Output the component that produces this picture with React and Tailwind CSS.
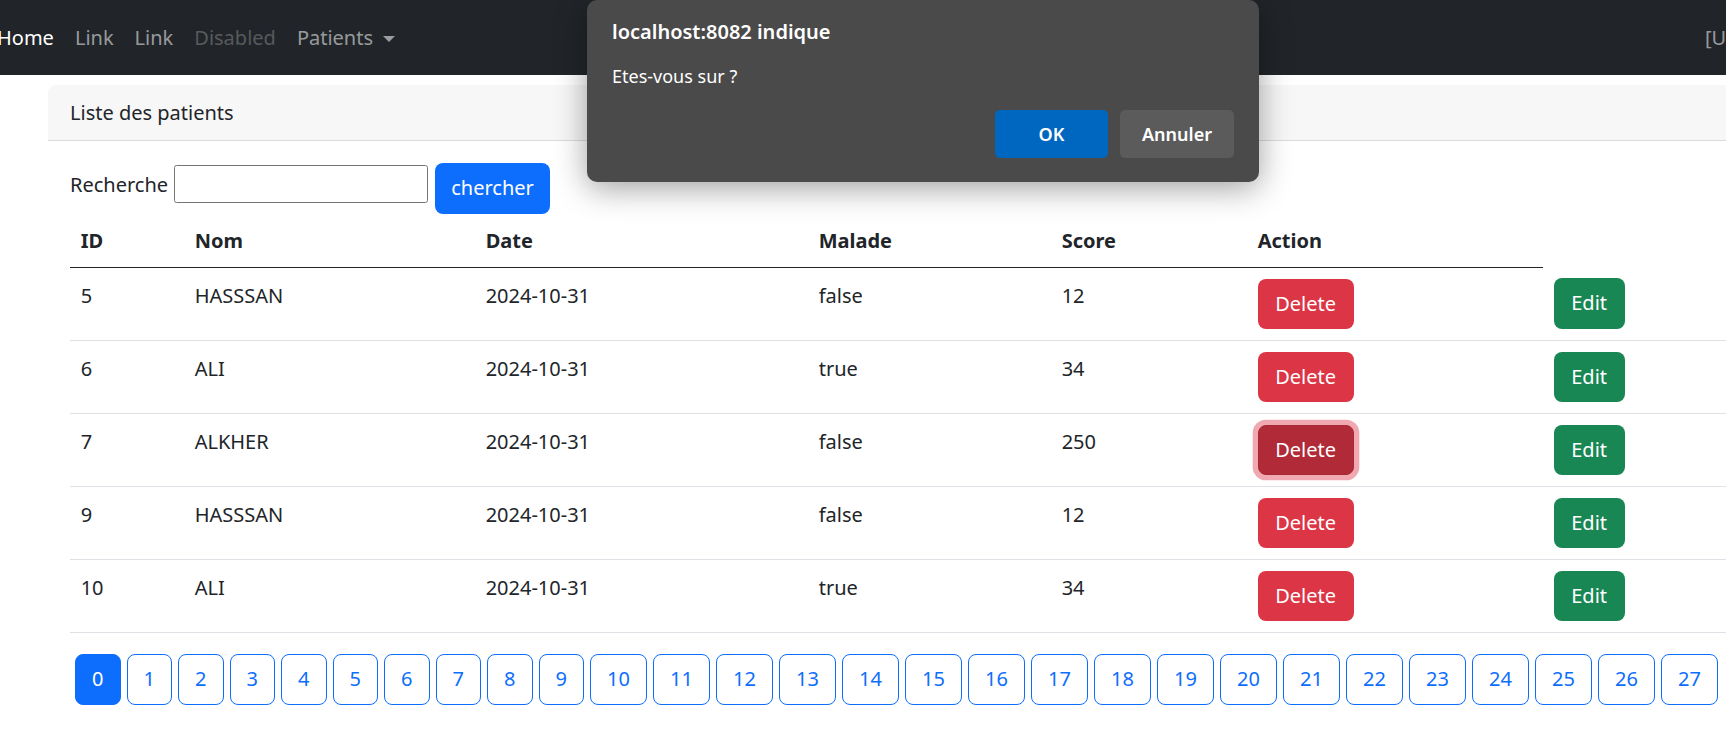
import React from "react";

const rows = [
  { id: 5, nom: "HASSSAN", date: "2024-10-31", malade: "false", score: 12 },
  { id: 6, nom: "ALI", date: "2024-10-31", malade: "true", score: 34 },
  { id: 7, nom: "ALKHER", date: "2024-10-31", malade: "false", score: 250, focus: true },
  { id: 9, nom: "HASSSAN", date: "2024-10-31", malade: "false", score: 12 },
  { id: 10, nom: "ALI", date: "2024-10-31", malade: "true", score: 34 },
];

const headers = ["ID", "Nom", "Date", "Malade", "Score", "Action"];
const pages = Array.from({ length: 28 }, (_, i) => i);

function Td({ children }) {
  return (
    <td className="px-[10.67px] pt-[12px] pb-[9.33px] align-top leading-[32px] border-b-[1.33px] border-[#dee2e6]">
      {children}
    </td>
  );
}

function BtnTd({ children }) {
  return (
    <td className="p-[10.67px] align-top leading-[32px] border-b-[1.33px] border-[#dee2e6]">
      {children}
    </td>
  );
}

export default function App() {
  return (
    <div className="relative w-full h-[729px] overflow-hidden bg-white text-[#212529] font-['Noto_Sans','Open_Sans',sans-serif] text-[20px]">
      {/* Navbar */}
      <nav className="h-[75px] bg-[#212529] flex items-center whitespace-nowrap leading-[32px]">
        <div className="flex items-center -ml-[3px] gap-[21px]">
          <span className="text-white">Home</span>
          <span className="text-[rgba(255,255,255,0.55)]">Link</span>
          <span className="text-[rgba(255,255,255,0.55)]">Link</span>
          <span className="text-[rgba(255,255,255,0.25)]">Disabled</span>
          <span className="flex items-center text-[rgba(255,255,255,0.55)]">
            <span>Patients</span>
            <span className="ml-[10px] mt-[2px] w-0 h-0 border-l-[6px] border-r-[6px] border-t-[6.4px] border-l-transparent border-r-transparent border-t-[rgba(255,255,255,0.55)]"></span>
          </span>
        </div>
        <span className="ml-[1310px] text-[rgba(255,255,255,0.55)]">[USER]</span>
      </nav>

      {/* Card */}
      <div className="pl-[48px] pt-[10px]">
        <div className="w-[1802px] rounded-t-[8px]">
          <div className="bg-[#f7f7f7] rounded-t-[8px] px-[22px] pt-[11.5px] pb-[11.5px] leading-[32px] border-b-[1.33px] border-[#dcdcdc]">
            Liste des patients
          </div>
          <div className="px-[22px] pt-[22px] pb-[40px]">
            {/* Search */}
            <div className="flex items-start h-[50.67px]">
              <span className="w-[98px] mt-[6px] leading-[32px] whitespace-nowrap">Recherche</span>
              <input
                type="text"
                className="ml-[6px] mt-[2px] w-[254px] h-[38px] border-[1.33px] border-[#767676] rounded-[2.67px] bg-white outline-none"
              />
              <button className="ml-[7px] w-[115px] h-[50.67px] rounded-[8px] bg-[#0d6efd] text-white leading-[32px]">
                chercher
              </button>
            </div>

            {/* Table */}
            <table className="table-fixed border-collapse w-[1773px] text-left mb-[21.33px]">
              <colgroup>
                <col className="w-[114px]" />
                <col className="w-[291px]" />
                <col className="w-[333px]" />
                <col className="w-[243px]" />
                <col className="w-[196px]" />
                <col className="w-[296px]" />
                <col className="w-[300px]" />
              </colgroup>
              <thead>
                <tr>
                  {headers.map((h) => (
                    <th
                      key={h}
                      className="px-[10.67px] pt-[11.67px] pb-[9.67px] align-top leading-[32px] font-bold border-b-[1.33px] border-[#212529]"
                    >
                      {h}
                    </th>
                  ))}
                </tr>
              </thead>
              <tbody>
                {rows.map((r) => (
                  <tr key={r.id}>
                    <Td>{r.id}</Td>
                    <Td>{r.nom}</Td>
                    <Td>{r.date}</Td>
                    <Td>{r.malade}</Td>
                    <Td>{r.score}</Td>
                    <BtnTd>
                      {r.focus ? (
                        <button className="block w-[96px] h-[50.67px] rounded-[8px] bg-[#b02a37] border-[1.33px] border-[#a52834] text-white leading-[32px] shadow-[0_0_0_5.33px_rgba(225,83,97,0.5)]">
                          Delete
                        </button>
                      ) : (
                        <button className="block w-[96px] h-[50.67px] rounded-[8px] bg-[#dc3545] text-white leading-[32px]">
                          Delete
                        </button>
                      )}
                    </BtnTd>
                    <BtnTd>
                      <button className="block w-[71px] h-[50.67px] rounded-[8px] bg-[#198754] text-white leading-[32px]">
                        Edit
                      </button>
                    </BtnTd>
                  </tr>
                ))}
              </tbody>
            </table>

            {/* Pagination */}
            <div className="flex gap-[6px] pl-[5px]">
              {pages.map((p) => (
                <button
                  key={p}
                  className={
                    p === 0
                      ? "h-[50.67px] w-[45.5px] rounded-[8px] border-[1.33px] border-[#0d6efd] bg-[#0d6efd] text-white leading-[32px] flex items-center justify-center shrink-0"
                      : p < 10
                      ? "h-[50.67px] w-[45.5px] rounded-[8px] border-[1.33px] border-[#0d6efd] bg-white text-[#0d6efd] leading-[32px] flex items-center justify-center shrink-0"
                      : "h-[50.67px] w-[57px] rounded-[8px] border-[1.33px] border-[#0d6efd] bg-white text-[#0d6efd] leading-[32px] flex items-center justify-center shrink-0"
                  }
                >
                  {p}
                </button>
              ))}
            </div>
          </div>
        </div>
      </div>

      {/* Confirm dialog */}
      <div className="absolute left-[587px] top-0 w-[672px] h-[182px] rounded-[10px] bg-[#4a4a4a] shadow-[0_6px_32px_rgba(0,0,0,0.38)] px-[25px] pt-[18px] text-white">
        <div className="text-[20px] leading-[28px] font-semibold">localhost:8082 indique</div>
        <div className="mt-[16px] text-[18px] leading-[28px]">Etes-vous sur ?</div>
        <div className="mt-[20px] flex justify-end gap-[12px]">
          <button className="w-[113px] h-[48px] rounded-[5px] bg-[#0067c0] text-[18px] font-semibold text-white">
            OK
          </button>
          <button className="w-[114px] h-[48px] rounded-[5px] bg-[#5b5b5b] text-[18px] font-semibold text-white">
            Annuler
          </button>
        </div>
      </div>
    </div>
  );
}
